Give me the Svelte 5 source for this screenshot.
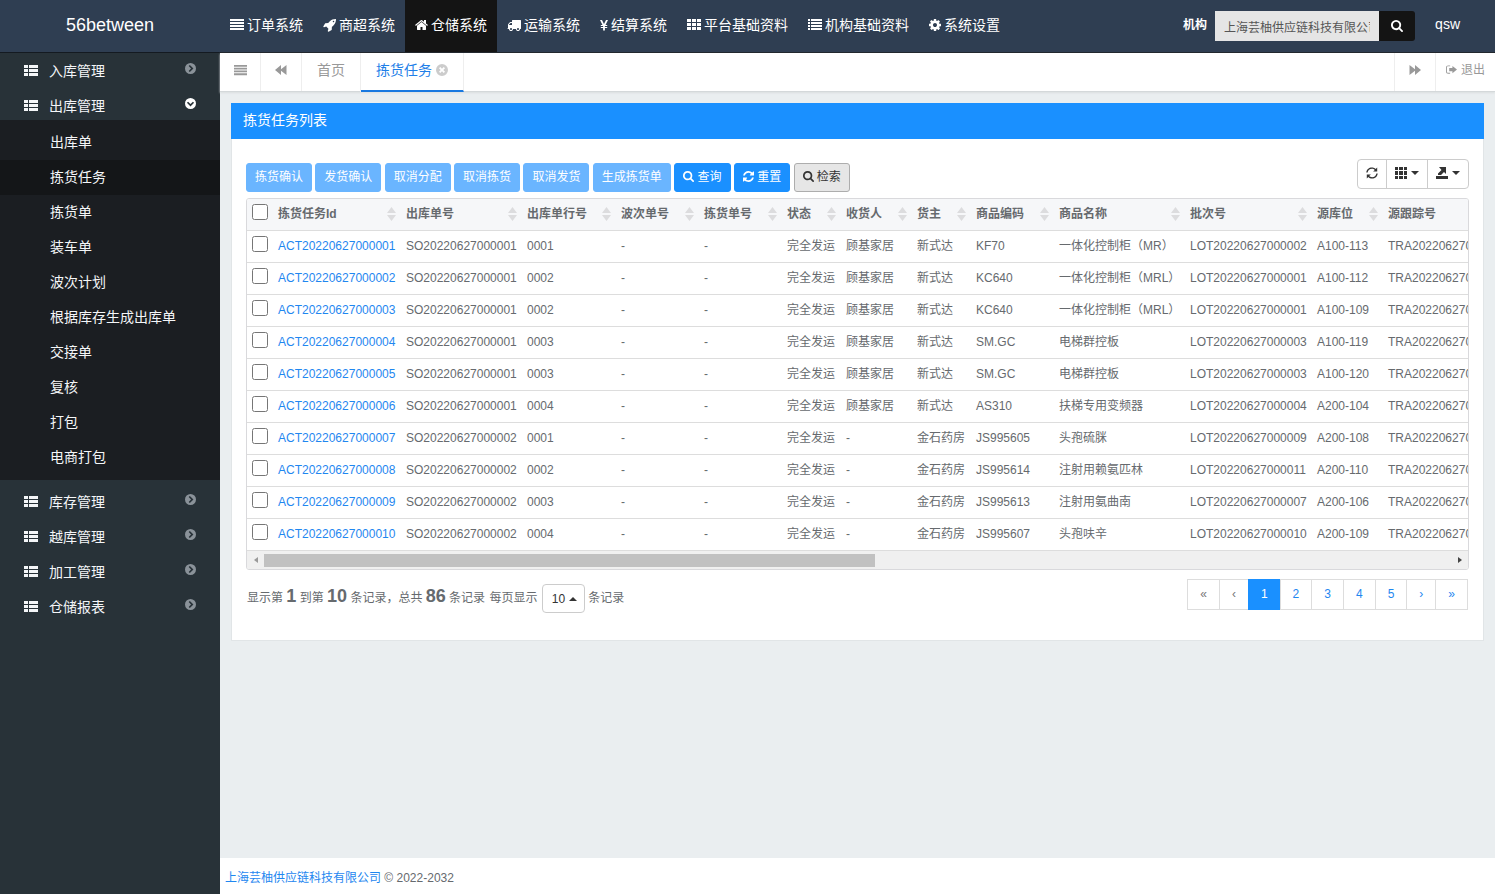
<script>
    import { onMount } from 'svelte';

    const icons = {
        align: { box: '0 0 14 14', d: 'M0 1h14v2H0zM0 4h14v2H0zM0 7h14v2H0zM0 10h14v2H0z' },
        rocket: { box: '0 0 1664 1792', d: 'M1440 448q0-40-28-68t-68-28-68 28-28 68 28 68 68 28 68-28 28-68zm224-288q0 249-75.500 430.500t-253.500 360.500q-81 80-195 176l-20 379q-2 16-16 26l-384 224q-7 4-16 4-12 0-23-9l-64-64q-13-14-8-32l85-276-281-281-276 85q-3 1-9 1-14 0-23-9l-64-64q-17-19-5-39l224-384q10-14 26-16l379-20q96-114 176-195 188-187 358-258t431-71q14 0 24 9.500t10 22.500z' },
        home: { box: '64 0 1664 1792', d: 'M1472 992v480q0 26-19 45t-45 19h-384v-384h-256v384h-384q-26 0-45-19t-19-45v-480q0-1 .5-3t.5-3l575-474 575 474q1 2 1 6zm223-69l-62 74q-8 9-21 11h-3q-13 0-21-7l-692-577-692 577q-12 8-24 7-13-2-21-11l-62-74q-8-10-7-23.500t11-21.500l719-599q32-26 76-26t76 26l244 204v-195q0-14 9-23t23-9h192q14 0 23 9t9 23v408l219 182q10 8 11 21.500t-7 23.500z' },
        truck: { box: '0 0 1792 1792', d: 'M640 1408q0-52-38-90t-90-38-90 38-38 90 38 90 90 38 90-38 38-90zm-384-512h384v-256h-158q-13 0-22 9l-195 195q-9 9-9 22v30zm1280 512q0-52-38-90t-90-38-90 38-38 90 38 90 90 38 90-38 38-90zm256-1088v1024q0 15-4 26.500t-13.500 18.500-16.500 11.500-23.500 6-22.500 2-25.500 0-22.500-.5q0 106-75 181t-181 75-181-75-75-181h-384q0 106-75 181t-181 75-181-75-75-181h-64q-3 0-22.500.5t-25.500 0-22.500-2-23.500-6-16.500-11.500-13.500-18.500-4-26.500q0-26 19-45t45-19v-320q0-8-.5-35t0-38 2.500-34.500 6.500-37 14-30.500 22.500-30l198-198q19-19 50.500-32t58.500-13h160v-192q0-26 19-45t45-19h1024q26 0 45 19t19 45z' },
        yen: { box: '0 0 8 14', d: 'M0 2h2l2 4 2-4h2L5.500 7h1.700v1H4.900v1h2.300v1H4.900v2.500H3.100V10H.8V9h2.300V8H.8V7h1.700z' },
        th: { box: '0 0 14 14', d: 'M0 1h4v3H0zM5 1h4v3H5zM10 1h4v3h-4zM0 5h4v3H0zM5 5h4v3H5zM10 5h4v3h-4zM0 9h4v3H0zM5 9h4v3H5zM10 9h4v3h-4z' },
        thSquare: { box: '0 0 12 12', d: 'M0 0h3v3H0zM4 0h4v3H4zM9 0h3v3H9zM0 4h3v4H0zM4 4h4v4H4zM9 4h3v4H9zM0 9h3v3H0zM4 9h4v3H4zM9 9h3v3H9z' },
        list: { box: '0 0 14 14', d: 'M0 1h2v2H0zM3 1h11v2H3zM0 4h2v2H0zM3 4h11v2H3zM0 7h2v2H0zM3 7h11v2H3zM0 10h2v2H0zM3 10h11v2H3z' },
        cog: { box: '128 0 1536 1792', d: 'M1152 896q0-106-75-181t-181-75-181 75-75 181 75 181 181 75 181-75 75-181zm512-109v222q0 12-8 23t-20 13l-185 28q-19 54-39 91 35 50 107 138 10 12 10 25t-9 23q-27 37-99 108t-94 71q-12 0-26-9l-138-108q-44 23-91 38-16 136-29 186-7 28-36 28h-222q-14 0-24.500-8.500t-11.500-21.500l-28-184q-49-16-90-37l-141 107q-10 9-25 9-14 0-25-11-126-114-165-168-7-10-7-23 0-12 8-23 15-21 51-66.500t54-70.500q-27-50-41-99l-183-27q-13-2-21-12.500t-8-23.500v-222q0-12 8-23t19-13l186-28q14-46 39-92-40-57-107-138-10-12-10-24 0-10 9-23 26-36 98.500-107.500t94.500-71.500q13 0 26 10l138 107q44-23 91-38 16-136 29-186 7-28 36-28h222q14 0 24.500 8.500t11.500 21.500l28 184q49 16 90 37l142-107q9-9 24-9 13 0 25 10 129 119 165 170 7 8 7 22 0 12-8 23-15 21-51 66.500t-54 70.500q26 50 41 98l183 28q13 2 21 12.500t8 23.500z' },
        search: { box: '64 128 1664 1664', d: 'M1216 832q0-185-131.500-316.500t-316.500-131.500-316.500 131.500-131.500 316.500 131.500 316.500 316.500 131.500 316.500-131.500 131.500-316.500zm512 832q0 52-38 90t-90 38q-54 0-90-38l-343-342q-179 124-399 124-143 0-273.500-55.500t-225-150-150-225-55.500-273.500 55.500-273.500 150-225 225-150 273.500-55.500 273.500 55.500 225 150 150 225 55.500 273.500q0 220-124 399l343 343q37 37 37 90z' },
        refresh: { box: '128 128 1536 1536', d: 'M1639 1056q0 5-1 7-64 268-268 434.500t-478 166.500q-146 0-282.500-55t-243.500-157l-129 129q-19 19-45 19t-45-19-19-45v-448q0-26 19-45t45-19h448q26 0 45 19t19 45-19 45l-137 137q71 66 161 102t187 36q134 0 250-65t186-179q11-17 53-117 8-23 30-23h192q13 0 22.500 9.500t9.500 22.500zm25-800v448q0 26-19 45t-45 19h-448q-26 0-45-19t-19-45 19-45l138-138q-148-137-349-137-134 0-250 65t-186 179q-11 17-53 117-8 23-30 23h-199q-13 0-22.500-9.500t-9.500-22.500v-7q65-268 270-434.500t480-166.500q146 0 284 55.500t245 156.500l130-129q19-19 45-19t45 19 19 45z' },
        sync: { box: '0 0 12 12', d: 'M.3 5.600C.5 2.500 3 .5 5.900.5c1.500 0 2.800.5 3.800 1.500L11.200.6v4H7.100l1.700-1.700C8.100 2.200 7.100 1.700 5.900 1.700 3.700 1.700 1.900 3.300 1.600 5.600zM11.700 6.400c-.2 3.100-2.700 5.100-5.600 5.100-1.500 0-2.800-.5-3.800-1.500L.8 11.400v-4h4.100L3.200 9.100c.7.7 1.700 1.200 2.900 1.200 2.200 0 4-1.600 4.300-3.900z' },
        thList: { box: '0 0 14 12', d: 'M0 0h4v3H0zM5 0h9v3H5zM0 4h4v3H0zM5 4h9v3H5zM0 8h4v3H0zM5 8h9v3H5z' },
        chevronRight: { box: '0 0 12 12', d: 'M6 0a6 6 0 1 1 0 12A6 6 0 0 1 6 0zM4 3.400 6.600 6 4 8.600 5.300 9.900 9.200 6 5.300 2.100z' },
        chevronDown: { box: '0 0 12 12', d: 'M6 0a6 6 0 1 1 0 12A6 6 0 0 1 6 0zM3.400 4 6 6.600 8.600 4 9.900 5.300 6 9.200 2.100 5.300z' },
        close: { box: '0 0 12 12', d: 'M6 0a6 6 0 1 1 0 12A6 6 0 0 1 6 0zM4.300 3 3 4.300 4.700 6 3 7.700 4.300 9 6 7.300 7.700 9 9 7.700 7.300 6 9 4.300 7.700 3 6 4.700z' },
        backward: { box: '0 0 12 10', d: 'M6 0v4.200L11.500 0v10L6 5.800V10L0 5z' },
        forward: { box: '0 0 12 10', d: 'M6 0v4.200L.5 0v10L6 5.800V10l6-5z' },
        signOut: { box: '0 0 12 10', d: 'M4.500.5v1H2.300C1.600 1.500 1 2 1 2.700v4.600c0 .7.6 1.200 1.300 1.200h2.200v1H2.300C1 9.500 0 8.500 0 7.300V2.700C0 1.500 1 .5 2.300.5zM7 1l5 4-5 4V6.700H3.500V3.300H7z' },
        export: { box: '0 0 12 12', d: 'M0 9h12v3H0zM3 0h7v7L8 5 5 8H2V6.500L5.500 3z' },
        caret: { box: '0 0 8 4', d: 'M0 0h8L4 4z' },
        caretUp: { box: '0 0 8 4', d: 'M0 4h8L4 0z' },
        sort: { box: '0 0 9 14', d: 'M4.500 0 9 6H0zM4.500 14 0 8h9z' },
        left: { box: '0 0 4 6', d: 'M4 0v6L0 3z' },
        right: { box: '0 0 4 6', d: 'M0 0v6l4-3z' }
    };

    const systems = [
        { name: '订单系统', icon: 'align', size: 14 },
        { name: '商超系统', icon: 'rocket', size: 13 },
        { name: '仓储系统', icon: 'home', size: 13 },
        { name: '运输系统', icon: 'truck', size: 14 },
        { name: '结算系统', icon: 'yen', size: 8 },
        { name: '平台基础资料', icon: 'th', size: 14 },
        { name: '机构基础资料', icon: 'list', size: 14 },
        { name: '系统设置', icon: 'cog', size: 12 }
    ];
    let system = $state('仓储系统');

    const menus = [
        { name: '入库管理' },
        {
            name: '出库管理',
            children: ['出库单', '拣货任务', '拣货单', '装车单', '波次计划', '根据库存生成出库单', '交接单', '复核', '打包', '电商打包']
        },
        { name: '库存管理' },
        { name: '越库管理' },
        { name: '加工管理' },
        { name: '仓储报表' }
    ];
    let opened = $state('出库管理');
    let current = $state('拣货任务');

    const actions = ['拣货确认', '发货确认', '取消分配', '取消拣货', '取消发货', '生成拣货单'];

    const columns = [
        { title: '拣货任务Id', width: 128 },
        { title: '出库单号', width: 121 },
        { title: '出库单行号', width: 94 },
        { title: '波次单号', width: 83 },
        { title: '拣货单号', width: 83 },
        { title: '状态', width: 59 },
        { title: '收货人', width: 71 },
        { title: '货主', width: 59 },
        { title: '商品编码', width: 83 },
        { title: '商品名称', width: 131 },
        { title: '批次号', width: 127 },
        { title: '源库位', width: 71 },
        { title: '源跟踪号', width: 1237 }
    ];

    const rows = [
        ['ACT20220627000001', 'SO20220627000001', '0001', '-', '-', '完全发运', '顾基家居', '新式达', 'KF70', '一体化控制柜（MR）', 'LOT20220627000002', 'A100-113', 'TRA20220627000002'],
        ['ACT20220627000002', 'SO20220627000001', '0002', '-', '-', '完全发运', '顾基家居', '新式达', 'KC640', '一体化控制柜（MRL）', 'LOT20220627000001', 'A100-112', 'TRA20220627000001'],
        ['ACT20220627000003', 'SO20220627000001', '0002', '-', '-', '完全发运', '顾基家居', '新式达', 'KC640', '一体化控制柜（MRL）', 'LOT20220627000001', 'A100-109', 'TRA20220627000001'],
        ['ACT20220627000004', 'SO20220627000001', '0003', '-', '-', '完全发运', '顾基家居', '新式达', 'SM.GC', '电梯群控板', 'LOT20220627000003', 'A100-119', 'TRA20220627000003'],
        ['ACT20220627000005', 'SO20220627000001', '0003', '-', '-', '完全发运', '顾基家居', '新式达', 'SM.GC', '电梯群控板', 'LOT20220627000003', 'A100-120', 'TRA20220627000003'],
        ['ACT20220627000006', 'SO20220627000001', '0004', '-', '-', '完全发运', '顾基家居', '新式达', 'AS310', '扶梯专用变频器', 'LOT20220627000004', 'A200-104', 'TRA20220627000004'],
        ['ACT20220627000007', 'SO20220627000002', '0001', '-', '-', '完全发运', '-', '金石药房', 'JS995605', '头孢硫脒', 'LOT20220627000009', 'A200-108', 'TRA20220627000009'],
        ['ACT20220627000008', 'SO20220627000002', '0002', '-', '-', '完全发运', '-', '金石药房', 'JS995614', '注射用赖氨匹林', 'LOT20220627000011', 'A200-110', 'TRA20220627000011'],
        ['ACT20220627000009', 'SO20220627000002', '0003', '-', '-', '完全发运', '-', '金石药房', 'JS995613', '注射用氨曲南', 'LOT20220627000007', 'A200-106', 'TRA20220627000007'],
        ['ACT20220627000010', 'SO20220627000002', '0004', '-', '-', '完全发运', '-', '金石药房', 'JS995607', '头孢呋辛', 'LOT20220627000010', 'A200-109', 'TRA20220627000010']
    ];
    let selected = $state([]);
    let page = $state(1);

    // horizontal scrollbar under the table
    let scroller;
    let thumb = $state({ left: 0, width: 50 });

    function updateThumb() {
        thumb = {
            left: (scroller.scrollLeft / scroller.scrollWidth) * 100,
            width: (scroller.clientWidth / scroller.scrollWidth) * 100
        };
    }

    function toggleAll(e) {
        selected = e.target.checked ? rows.map((r) => r[0]) : [];
    }

    onMount(updateThumb);
</script>

<svelte:window onresize={updateThumb} />

{#snippet icon(name, size)}
    <svg viewBox={icons[name].box} width={size} aria-hidden="true"><path fill-rule="evenodd" d={icons[name].d} /></svg>
{/snippet}

<div class="app">
    <header>
        <a class="logo" href="#home">56between</a>
        <nav class="systems">
            {#each systems as s}
                <a href="#system" class:active={s.name === system} onclick={() => (system = s.name)}>
                    {@render icon(s.icon, s.size)}<span>{s.name}</span>
                </a>
            {/each}
        </nav>
        <form class="org" onsubmit={(e) => e.preventDefault()}>
            <label for="org">机构</label>
            <input id="org" type="text" value="上海芸柚供应链科技有限公司" readonly />
            <button type="submit" aria-label="选择机构">{@render icon('search', 12)}</button>
        </form>
        <a class="user" href="#user">qsw</a>
    </header>

    <div class="main">
        <aside>
            {#each menus as m}
                <button class="menu" class:open={opened === m.name} onclick={() => (opened = opened === m.name ? '' : m.name)}>
                    {@render icon('thList', 14)}
                    <span>{m.name}</span>
                    <i>{@render icon(opened === m.name ? 'chevronDown' : 'chevronRight', 11)}</i>
                </button>
                {#if m.children && opened === m.name}
                    <ul>
                        {#each m.children as child}
                            <li><a href="#page" class:active={current === child} onclick={() => (current = child)}>{child}</a></li>
                        {/each}
                    </ul>
                {/if}
            {/each}
        </aside>

        <div class="page">
            <div class="tabs">
                <button class="tool" aria-label="折叠菜单">{@render icon('align', 13)}</button>
                <button class="tool" aria-label="向左">{@render icon('backward', 12)}</button>
                <a class="tab" href="#index">首页</a>
                <a class="tab active" href="#pick">拣货任务{@render icon('close', 12)}</a>
                <button class="tool next" aria-label="向右">{@render icon('forward', 12)}</button>
                <a class="logout" href="#logout">{@render icon('signOut', 11)}退出</a>
            </div>

            <main>
                <section class="card">
                    <h1>拣货任务列表</h1>
                    <div class="body">
                        <div class="toolbar">
                            <div>
                                {#each actions as a}
                                    <button class="btn" disabled>{a}</button>{' '}
                                {/each}
                                <button class="btn">{@render icon('search', 11)} 查询</button>
                                <button class="btn">{@render icon('refresh', 11)} 重置</button>
                                <button class="btn grey">{@render icon('search', 11)} 检索</button>
                            </div>
                            <div class="group">
                                <button aria-label="刷新">{@render icon('sync', 12)}</button>
                                <button aria-label="列">{@render icon('thSquare', 12)}{@render icon('caret', 8)}</button>
                                <button aria-label="导出">{@render icon('export', 12)}{@render icon('caret', 8)}</button>
                            </div>
                        </div>

                        <div class="grid">
                            <div class="scroller" bind:this={scroller} onscroll={updateThumb}>
                                <table>
                                    <colgroup>
                                        <col class="check" />
                                        {#each columns as c}
                                            <col style="width: {c.width}px" />
                                        {/each}
                                    </colgroup>
                                    <thead>
                                        <tr>
                                            <th><input type="checkbox" aria-label="全选" onchange={toggleAll} /></th>
                                            {#each columns as c}
                                                <th><div class="th">{c.title}{@render icon('sort', 9)}</div></th>
                                            {/each}
                                        </tr>
                                    </thead>
                                    <tbody>
                                        {#each rows as row}
                                            <tr>
                                                <td><input type="checkbox" aria-label={row[0]} value={row[0]} bind:group={selected} /></td>
                                                {#each row as cell, i}
                                                    <td>{#if i === 0}<a href="#task">{cell}</a>{:else}{cell}{/if}</td>
                                                {/each}
                                            </tr>
                                        {/each}
                                    </tbody>
                                </table>
                            </div>
                            <div class="scrollbar">
                                <button class="start" aria-label="向左滚动" onclick={() => scroller.scrollBy(-80, 0)}>{@render icon('left', 4)}</button>
                                <div class="track">
                                    <div class="thumb" style="margin-left: {thumb.left}%; width: {thumb.width}%"></div>
                                </div>
                                <button aria-label="向右滚动" onclick={() => scroller.scrollBy(80, 0)}>{@render icon('right', 4)}</button>
                            </div>
                        </div>

                        <div class="bottom">
                            <div class="info">
                                显示第 <b>1</b> 到第 <b>10</b> 条记录，总共 <b>86</b> 条记录
                                <label for="size">每页显示</label>
                                <span class="size">
                                    <select id="size">
                                        <option>10</option>
                                        <option>25</option>
                                        <option>50</option>
                                    </select>
                                    {@render icon('caretUp', 8)}
                                </span>
                                条记录
                            </div>
                            <nav class="pages">
                                <a class="off" href="#first">«</a>
                                <a class="off" href="#prev">‹</a>
                                {#each [1, 2, 3, 4, 5] as n}
                                    <a href="#p" class:active={page === n} onclick={() => (page = n)}>{n}</a>
                                {/each}
                                <a href="#next">›</a>
                                <a href="#last">»</a>
                            </nav>
                        </div>
                    </div>
                </section>
            </main>

            <footer><a href="#company">上海芸柚供应链科技有限公司</a> © 2022-2032</footer>
        </div>
    </div>
</div>

<style>
    :global(body) {
        margin: 0;
    }

    .app {
        display: flex;
        flex-direction: column;
        min-height: 100vh;
        color: #666a6e;
        font: 12px/18px "Liberation Sans", "Noto Sans CJK SC", sans-serif;
    }

    .app * {
        box-sizing: border-box;
    }

    a {
        color: #1f87f0;
        text-decoration: none;
    }

    button, input, select {
        margin: 0;
        padding: 0;
        border: 0;
        border-radius: 0;
        color: inherit;
        background: none;
        font: inherit;
    }

    button {
        cursor: pointer;
    }

    svg {
        flex: none;
        fill: currentColor;
    }

    header {
        display: flex;
        height: 53px;
        background: #2f3e52;
        border-bottom: 1px solid #141a21;
    }

    header a {
        color: #fff;
    }

    .logo {
        flex: none;
        width: 220px;
        font-size: 18px;
        line-height: 50px;
        text-align: center;
    }

    .systems {
        display: flex;
        font-size: 14px;
    }

    .systems a {
        display: flex;
        align-items: center;
        gap: 3px;
        padding: 0 10px 3px;
        white-space: nowrap;
    }

    .systems .active {
        background: #141414;
    }

    .org {
        display: flex;
        align-items: center;
        height: 52px;
        margin-left: auto;
        color: #fff;
    }

    .org label {
        margin-right: 8px;
        font-weight: bold;
        padding-bottom: 2px;
    }

    .org input {
        width: 164px;
        height: 30px;
        padding: 0 9px;
        background: #e5e5e5;
        color: #555;
    }

    .org button {
        display: flex;
        align-items: center;
        justify-content: center;
        width: 36px;
        height: 30px;
        background: #141414;
        border-radius: 0 3px 3px 0;
    }

    .user {
        padding: 0 35px 0 20px;
        font-size: 14px;
        line-height: 48px;
    }

    .main {
        display: flex;
        flex: 1;
    }

    aside {
        flex: none;
        width: 220px;
        padding-top: 1px;
        background: #283238;
        color: #f4f6f8;
        font-size: 14px;
    }

    .menu {
        display: flex;
        align-items: center;
        width: 100%;
        height: 35px;
        padding: 0 24px 1px;
        gap: 11px;
        text-align: left;
    }

    .menu i {
        display: flex;
        margin-left: auto;
        padding-bottom: 6px;
        color: #8a9299;
    }

    .menu.open i {
        color: #fff;
    }

    ul {
        margin: -4px 0 5px;
        padding: 5px 0;
        background: #1b1e22;
        list-style: none;
    }

    li a {
        display: block;
        padding-left: 50px;
        color: #f4f6f8;
        line-height: 35px;
    }

    li .active {
        background: #141618;
    }

    .page {
        display: flex;
        flex: 1;
        flex-direction: column;
        min-width: 0;
        background: #eaeef0;
    }

    .tabs {
        display: flex;
        height: 39px;
        background: #fff;
        border-bottom: 1px solid #d4d8da;
        box-shadow: 0 1px 2px #dadedf;
        color: #999;
        font-size: 14px;
        line-height: 34px;
    }

    .tabs a {
        color: #999;
    }

    .tool {
        display: flex;
        align-items: center;
        justify-content: center;
        width: 41px;
        padding-bottom: 4px;
        border-right: 1px solid #eee;
    }

    .next {
        width: 42px;
        margin-left: auto;
        border-left: 1px solid #eee;
    }

    .tab {
        display: flex;
        align-items: center;
        gap: 4px;
        height: 39px;
        padding: 0 15px 5px;
        border-right: 1px solid #eee;
    }

    .tab.active {
        padding-bottom: 3px;
        border-bottom: 2px solid #1878e0;
        color: #1f7fe8;
    }

    .tab svg {
        color: #ccc;
    }

    .tabs .logout {
        display: flex;
        align-items: center;
        gap: 4px;
        padding: 0 10px 4px;
        font-size: 12px;
    }

    main {
        flex: 1;
        padding: 11px;
    }

    .card {
        background: #fff;
        border: 1px solid #e1e5e7;
        border-top: 0;
    }

    h1 {
        margin: 0 -1px;
        padding: 0 12px 2px;
        background: #1a90ff;
        color: #fff;
        font-size: 14px;
        font-weight: normal;
        line-height: 34px;
    }

    .body {
        padding: 20px 14px 27px;
    }

    .toolbar {
        display: flex;
        align-items: flex-start;
        justify-content: space-between;
        height: 39px;
    }

    .toolbar > div:first-child {
        padding-top: 4px;
    }

    .btn {
        height: 29px;
        padding: 0 8px 1px;
        border: 1px solid #1a90ff;
        border-radius: 3px;
        background: #1a90ff;
        color: #fff;
    }

    .btn:disabled {
        border-color: #6ab5ff;
        background: #6ab5ff;
        cursor: not-allowed;
    }

    .btn.grey {
        border-color: #adadad;
        background: #e6e6e6;
        color: #333;
    }

    .btn svg {
        vertical-align: -1px;
    }

    .group {
        display: flex;
        height: 30px;
        border: 1px solid #ccc;
        border-radius: 4px;
        color: #333;
    }

    .group button {
        display: flex;
        align-items: center;
        gap: 4px;
        padding: 0 8px 3px;
    }

    .group button + button {
        border-left: 1px solid #ccc;
    }

    .grid {
        border: 1px solid #d9d9dc;
        border-radius: 3px;
        overflow: hidden;
    }

    .scroller {
        overflow: hidden;
    }

    table {
        width: 2373px;
        table-layout: fixed;
        border-collapse: collapse;
    }

    .check {
        width: 26px;
    }

    th, td {
        height: 32px;
        padding: 0 5px;
        border-bottom: 1px solid #ddd;
        text-align: left;
        white-space: nowrap;
    }

    th {
        height: 31px;
    }

    thead {
        background: #f6f7f9;
    }

    .th {
        display: flex;
        align-items: center;
        justify-content: space-between;
    }

    .th svg {
        color: #dcdcde;
    }

    td input, th input {
        display: block;
        width: 16px;
        height: 16px;
        margin-bottom: 4px;
    }

    .scrollbar {
        display: flex;
        height: 18px;
        background: #f0f0f0;
    }

    .scrollbar button {
        display: flex;
        align-items: center;
        justify-content: center;
        width: 17px;
        color: #444;
    }

    .scrollbar .start {
        color: #999;
    }

    .track {
        flex: 1;
        padding: 3px 0 2px;
    }

    .thumb {
        height: 13px;
        background: #c1c1c1;
    }

    .bottom {
        display: flex;
        justify-content: space-between;
        margin-top: 9px;
        padding: 0 1px;
    }

    .info {
        padding-top: 3px;
        line-height: 29px;
    }

    .info label {
        margin: 0 1px;
    }

    b {
        font-size: 18px;
    }

    .size {
        display: inline-block;
        position: relative;
    }

    select {
        width: 43px;
        height: 29px;
        padding-left: 9px;
        border: 1px solid #ccc;
        border-radius: 4px;
        color: #333;
        appearance: none;
        vertical-align: middle;
    }

    .size svg {
        position: absolute;
        top: 13px;
        right: 8px;
        color: #333;
        pointer-events: none;
    }

    .pages {
        display: flex;
        align-items: flex-start;
    }

    .pages a {
        margin-left: -1px;
        padding: 0 12px;
        border: 1px solid #ddd;
        line-height: 29px;
    }

    .pages .off {
        color: #777;
    }

    .pages .active {
        border-color: #1a90ff;
        background: #1a90ff;
        color: #fff;
    }

    footer {
        height: 36px;
        padding: 0 5px;
        background: #fff;
        line-height: 40px;
    }
</style>
